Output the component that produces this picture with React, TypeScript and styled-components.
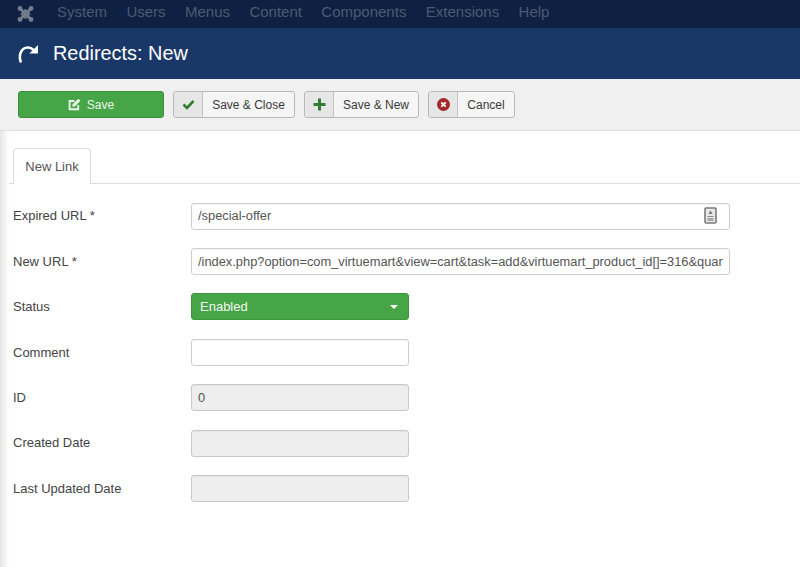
import React from "react";
import styled, { createGlobalStyle } from "styled-components";

const Global = createGlobalStyle`
  html, body { margin: 0; padding: 0; background: #fff; }
  body { font-family: "Liberation Sans", Arial, sans-serif; font-size: 13px; color: #515151; width: 800px; height: 567px; overflow: hidden; }
`;
const Page = styled.div`position: relative; width: 800px; height: 567px; overflow: hidden;`;
const EdgeShade = styled.div`
  position: absolute; left: 0; top: 131px; bottom: 0; width: 9px;
  background: linear-gradient(to right, #e6e6e6, #ffffff);
  pointer-events: none;
`;
const TopNav = styled.nav`
  height: 28px; background: #0e2142; display: flex; align-items: center; padding-left: 17px; box-sizing: border-box;
`;
const NavItems = styled.div`display: flex; gap: 19.4px; margin-left: 23px; padding-bottom: 4px;`;
const NavItem = styled.span`font-size: 15px; color: #4d5a72; line-height: 24px;`;
const Header = styled.header`
  height: 51px; background: #1a3867; display: flex; align-items: center; padding-left: 17px; box-sizing: border-box; gap: 14px;
`;
const Title = styled.h1`margin: 0; font-size: 19.9px; font-weight: 400; color: #fff; line-height: 51px;`;
const Toolbar = styled.div`
  height: 52px; background: #f0f0f0; border-bottom: 1px solid #dedede; box-sizing: border-box;
  display: flex; align-items: center; gap: 9px; padding-left: 18px;
`;
const SaveButton = styled.div`
  width: 146px; height: 27px; box-sizing: border-box; background: #46a546; border: 1px solid #3b8f3b; border-radius: 3px;
  display: flex; align-items: center; justify-content: center; gap: 6px; color: #eaf5ea; font-size: 12px;
`;
const ToolButton = styled.div`
  height: 27px; box-sizing: border-box; display: flex; border: 1px solid #b8b8b8; border-radius: 3px; background: #f5f5f5; overflow: hidden; font-size: 12px; color: #3a3a3a;
`;
const ToolIcon = styled.span`
  width: 28px; background: #e6e6e6; border-right: 1px solid #c4c4c4; display: flex; align-items: center; justify-content: center;
`;
const ToolLabel = styled.span<{ $w: number }>`
  width: ${p => p.$w}px; display: flex; align-items: center; justify-content: center;
`;
const Tabs = styled.div`
  margin-top: 17px; height: 35px; border-bottom: 1px solid #ddd; padding-left: 13px; display: flex;
`;
const Tab = styled.div`
  width: 78px; height: 36px; box-sizing: border-box; border: 1px solid #ddd; border-bottom: 0; border-radius: 4px 4px 0 0; background: #fff;
  display: flex; align-items: center; justify-content: center; font-size: 13px; color: #555; padding-bottom: 1px;
`;
const Form = styled.div`
  margin-top: 18.6px; padding-left: 13px; display: flex; flex-direction: column; gap: 18.4px;
`;
const Row = styled.div`display: flex; align-items: center; height: 27px;`;
const Label = styled.label`width: 178px; font-size: 13px; color: #444; padding-bottom: 0.4px;`;
const Field = styled.div<{ $wide?: boolean; $disabled?: boolean }>`
  position: relative; width: ${p => (p.$wide ? 539 : 218)}px; height: 27px; box-sizing: border-box;
  border: 1px solid ${p => (p.$disabled ? "#c8c8c8" : "#cfcfcf")}; border-radius: 3px;
  background: ${p => (p.$disabled ? "#eeeeee" : "#fff")};
  box-shadow: inset 0 1px 1px rgba(0,0,0,.04);
  display: flex; align-items: center; padding: 0 6px 0.6px; font-size: 12.85px; color: #555;
  overflow: hidden; white-space: nowrap;
`;
const FieldText = styled.span`display: block; overflow: hidden; flex: 1;`;
const FieldIcon = styled.svg`position: absolute; right: 12px; top: 3px;`;
const Select = styled.div`
  width: 218px; height: 27px; box-sizing: border-box; background: #46a546; border: 1px solid #3f983f; border-radius: 3px;
  display: flex; align-items: center; justify-content: space-between; padding: 0 10px 0.6px 8px; color: #f2f8f2; font-size: 13px;
`;
const Caret = styled.span`
  width: 0; height: 0; border-left: 4px solid transparent; border-right: 4px solid transparent; border-top: 4px solid #fff;
`;

const Logo = () => (
  <svg width="17" height="18" viewBox="0 0 17 18" fill="none" stroke="#737d8e">
    <path d="M3.5 4L13.5 14M13.5 4L3.5 14" strokeWidth="2.8" />
    <circle cx="3" cy="3.5" r="2.4" fill="#737d8e" stroke="none" />
    <circle cx="14" cy="3.5" r="2.4" fill="#737d8e" stroke="none" />
    <circle cx="3" cy="14.5" r="2.4" fill="#737d8e" stroke="none" />
    <circle cx="14" cy="14.5" r="2.4" fill="#737d8e" stroke="none" />
    <path d="M4.6 9L8.5 5L12.4 9L8.5 13Z" strokeWidth="1.8" />
  </svg>
);
const Redo = () => (
  <svg width="22" height="22" viewBox="0 0 22 22" fill="none">
    <path d="M3.6 18.5C1.4 11.5 4.5 4.7 10.5 4.5C13 4.4 15 5.3 16.4 6.8" stroke="#fff" strokeWidth="2.6" strokeLinecap="round" />
    <path d="M21 2V10.6H12.4Z" fill="#fff" />
  </svg>
);

const rows: { label: string; kind: string; value?: string }[] = [
  { label: "Comment", kind: "text" },
  { label: "ID", kind: "disabled", value: "0" },
  { label: "Created Date", kind: "disabled" },
  { label: "Last Updated Date", kind: "disabled" },
];

export default function App() {
  return (
    <Page>
      <Global />
      <TopNav>
        <Logo />
        <NavItems>
          {["System", "Users", "Menus", "Content", "Components", "Extensions", "Help"].map(n => (
            <NavItem key={n}>{n}</NavItem>
          ))}
        </NavItems>
      </TopNav>
      <Header>
        <Redo />
        <Title>Redirects: New</Title>
      </Header>
      <Toolbar>
        <SaveButton>
          <svg width="13" height="13" viewBox="0 0 13 13" fill="none">
            <path d="M10.2 7V11.2H1.6V3H6.4" stroke="#eaf5ea" strokeWidth="1.9" />
            <path d="M4.6 6.2L10.4 0.8L12.4 2.8L6.8 8.4L4.4 8.8Z" fill="#eaf5ea" />
          </svg>
          Save
        </SaveButton>
        <ToolButton>
          <ToolIcon>
            <svg width="13" height="11" viewBox="0 0 13 11" fill="none">
              <path d="M1.5 5.5L5 9L11.5 2" stroke="#2f7d32" strokeWidth="2.6" />
            </svg>
          </ToolIcon>
          <ToolLabel $w={91}>Save &amp; Close</ToolLabel>
        </ToolButton>
        <ToolButton>
          <ToolIcon>
            <svg width="13" height="13" viewBox="0 0 13 13">
              <path d="M5 0.5H8V5H12.5V8H8V12.5H5V8H0.5V5H5Z" fill="#2f7d32" />
            </svg>
          </ToolIcon>
          <ToolLabel $w={84}>Save &amp; New</ToolLabel>
        </ToolButton>
        <ToolButton>
          <ToolIcon>
            <svg width="13" height="13" viewBox="0 0 13 13">
              <circle cx="6.5" cy="6.5" r="6.5" fill="#a32a2a" />
              <path d="M4.3 4.3L8.7 8.7M8.7 4.3L4.3 8.7" stroke="#fff" strokeWidth="1.8" />
            </svg>
          </ToolIcon>
          <ToolLabel $w={56}>Cancel</ToolLabel>
        </ToolButton>
      </Toolbar>
      <Tabs>
        <Tab>New Link</Tab>
      </Tabs>
      <Form>
        <Row>
          <Label>Expired URL *</Label>
          <Field $wide>
            <FieldText>/special-offer</FieldText>
            <FieldIcon width="13" height="17" viewBox="0 0 13 17">
              <rect x="1" y="1" width="11" height="15" rx="1" fill="#e8e8e8" stroke="#7a7a7a" strokeWidth="1.6" />
              <path d="M6.5 3.5L8.5 7H4.5Z" fill="#777" />
              <path d="M3.5 9.5H9.5" stroke="#888" strokeWidth="1.2" />
              <rect x="3.5" y="11" width="6" height="3" fill="#a8a8a8" />
            </FieldIcon>
          </Field>
        </Row>
        <Row>
          <Label>New URL *</Label>
          <Field $wide>
            <FieldText>/index.php?option=com_virtuemart&amp;view=cart&amp;task=add&amp;virtuemart_product_id[]=316&amp;quantity[]=1</FieldText>
          </Field>
        </Row>
        <Row>
          <Label>Status</Label>
          <Select>
            Enabled
            <Caret />
          </Select>
        </Row>
        {rows.map(r => (
          <Row key={r.label}>
            <Label>{r.label}</Label>
            <Field $disabled={r.kind === "disabled"}>
              <FieldText>{r.value}</FieldText>
            </Field>
          </Row>
        ))}
      </Form>
      <EdgeShade />
    </Page>
  );
}
